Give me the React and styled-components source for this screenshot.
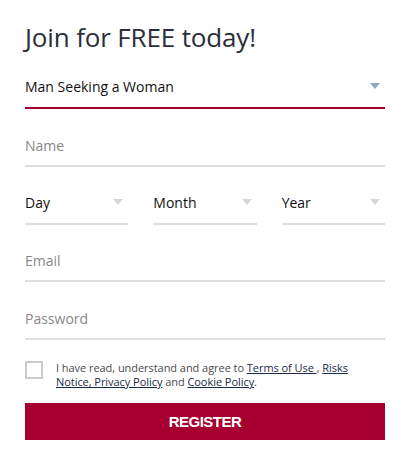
import React from 'react'
import styled, { createGlobalStyle } from 'styled-components'

const GlobalStyle = createGlobalStyle`
  body {
    margin: 0;
    background: #fff;
    font-family: "Open Sans", "Noto Sans", sans-serif;
  }
`

const Arrow = ({ color = '#d6d6d6' }) =>
  <svg width="10" height="6" viewBox="0 0 10 6">
    <path d="M0 0 H10 L5 6 Z" fill={color} />
  </svg>

export default () =>
  <Form>
    <GlobalStyle />
    <Title>Join for FREE today!</Title>
    <Select active>
      <span>Man Seeking a Woman</span>
      <Arrow color="#8fa7c2" />
    </Select>
    <Field>Name</Field>
    <DateRow>
      {['Day', 'Month', 'Year'].map(label =>
        <Select key={label}>
          <span>{label}</span>
          <Arrow />
        </Select>
      )}
    </DateRow>
    <Field gap={19}>Email</Field>
    <Field>Password</Field>
    <Agree>
      <Box />
      <p>
        I have read, understand and agree to <a href="#">Terms of Use </a>, <a href="#">Risks</a>
        <br />
        <a href="#">Notice, Privacy Policy</a> and <a href="#">Cookie Policy</a>.
      </p>
    </Agree>
    <Button>REGISTER</Button>
  </Form>

const Form = styled.div`
  width: 360px;
  padding: 20px 25px 0 25px;
  display: flex;
  flex-direction: column;
`

const Title = styled.h1`
  margin: 0 0 15px 0;
  font-family: "Open Sans", sans-serif;
  font-weight: 400;
  font-size: 26px;
  line-height: 34px;
  color: #2b2d3a;
  letter-spacing: -0.15px;
`

const Select = styled.div`
  display: flex;
  align-items: center;
  justify-content: space-between;
  height: 38px;
  padding: 0 5px 0 0;
  border-bottom: 2px solid ${props => props.active ? '#a50030' : '#dedede'};
  font-size: 14px;
  color: #111;

  span {
    padding-bottom: 4px;
  }

  svg {
    margin-bottom: 4px;
  }
`

const Field = styled.div`
  box-sizing: border-box;
  height: 38px;
  margin-top: ${props => props.gap || 20}px;
  padding-bottom: 4px;
  border-bottom: 2px solid #dedede;
  display: flex;
  align-items: center;
  font-size: 14px;
  color: #888;
`

const DateRow = styled.div`
  display: grid;
  grid-template-columns: 1fr 1fr 1fr;
  column-gap: 25px;
  margin-top: 18px;
`

const Agree = styled.div`
  display: flex;
  align-items: flex-start;
  gap: 13px;
  margin-top: 21px;

  p {
    margin: 0;
    font-size: 11px;
    line-height: 14px;
    letter-spacing: -0.05px;
    color: #4a4a4a;
    font-family: "Open Sans", sans-serif;
  }

  a {
    color: #1a2a4a;
    text-decoration: underline;
  }
`

const Box = styled.span`
  flex: none;
  width: 18px;
  height: 18px;
  box-sizing: border-box;
  border: 2px solid #ccc;
`

const Button = styled.button`
  margin-top: 14px;
  height: 37px;
  border: none;
  background: #a50030;
  color: #fff;
  font-family: "Liberation Sans", Arial, sans-serif;
  font-weight: 700;
  font-size: 15px;
  letter-spacing: -0.5px;
`
